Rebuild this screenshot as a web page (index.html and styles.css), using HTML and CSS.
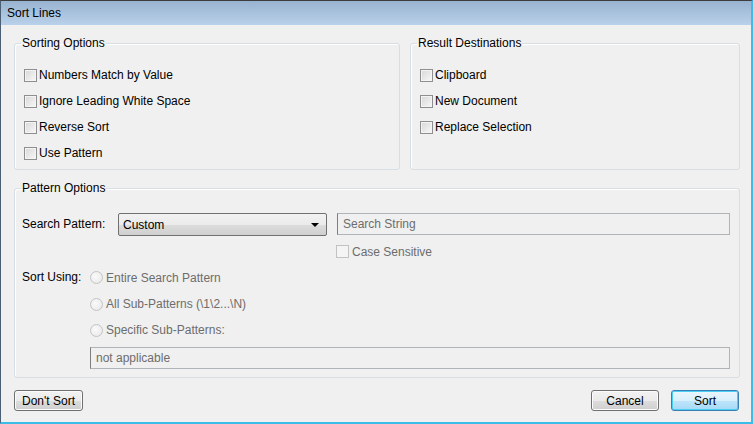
FILE: index.html
```html
<!DOCTYPE html>
<html>
<head>
<meta charset="utf-8">
<link rel="stylesheet" href="styles.css">
</head>
<body>
<div class="window">
  <div class="titlebar">Sort Lines</div>
  <div class="body">
    <div class="top-groups">
      <fieldset class="group">
        <legend>Sorting Options</legend>
        <div class="group-inner">
          <div class="row"><span class="check"></span><span>Numbers Match by Value</span></div>
          <div class="row"><span class="check"></span><span>Ignore Leading White Space</span></div>
          <div class="row"><span class="check"></span><span>Reverse Sort</span></div>
          <div class="row"><span class="check"></span><span>Use Pattern</span></div>
        </div>
      </fieldset>
      <fieldset class="group">
        <legend>Result Destinations</legend>
        <div class="group-inner">
          <div class="row"><span class="check"></span><span>Clipboard</span></div>
          <div class="row"><span class="check"></span><span>New Document</span></div>
          <div class="row"><span class="check"></span><span>Replace Selection</span></div>
        </div>
      </fieldset>
    </div>
    <fieldset class="group pattern">
      <legend>Pattern Options</legend>
      <div class="pattern-inner">
        <div class="search-row">
          <span class="field-label">Search Pattern:</span>
          <div class="combo"><span>Custom</span><span class="arrow"></span></div>
          <div class="textbox">Search String</div>
        </div>
        <div class="case-row">
          <span class="check disabled"></span><span class="dim">Case Sensitive</span>
        </div>
        <div class="sort-using">
          <span class="field-label short">Sort Using:</span>
          <div class="radios">
            <div class="radio-row first"><span class="radio"></span><span class="dim">Entire Search Pattern</span></div>
            <div class="radio-row"><span class="radio"></span><span class="dim">All Sub-Patterns (\1\2...\N)</span></div>
            <div class="radio-row"><span class="radio"></span><span class="dim">Specific Sub-Patterns:</span></div>
            <div class="textbox wide">not applicable</div>
          </div>
        </div>
      </div>
    </fieldset>
    <div class="footer">
      <button class="btn dont">Don't Sort</button>
      <div class="spacer"></div>
      <button class="btn">Cancel</button>
      <button class="btn default">Sort</button>
    </div>
  </div>
</div>
</body>
</html>
```

FILE: styles.css
```css
* { box-sizing: border-box; }
html, body { margin: 0; padding: 0; }
body {
  font-family: "Liberation Sans", Arial, sans-serif;
  font-size: 12px;
  color: #000;
  background: #f0f0f0;
}
.window {
  width: 753px;
  height: 424px;
  background: #f0f0f0;
  border-top: 1px solid #3c3c3c;
  border-left: 1px solid #4a5f74;
  border-right: 2px solid #3cbde8;
  border-bottom: 2px solid #3cbde8;
  display: flex;
  flex-direction: column;
  overflow: hidden;
}
.titlebar {
  height: 24px;
  line-height: 24px;
  padding-left: 6px;
  background: linear-gradient(#98b3d0, #b9d1ea);
  color: #000;
  font-size: 12px;
}
.body {
  padding: 11px 11px 0 13px;
  flex: 1;
  display: flex;
  flex-direction: column;
}
.top-groups {
  display: grid;
  grid-template-columns: 386px 1fr;
  column-gap: 10px;
}
.group {
  margin: 0;
  padding: 0;
  border: 1px solid #d5dfe5;
  border-radius: 3px;
  box-shadow: inset 1px 1px 0 #fff;
  min-width: 0;
}
.group legend {
  margin-left: 6px;
  padding: 0 1px;
  line-height: 14px;
  height: 14px;
  font-size: 12px;
}
.group-inner {
  padding: 12px 0 3px 9px;
  height: 119px;
}
.row {
  height: 26px;
  display: flex;
  align-items: center;
}
.check {
  width: 13px;
  height: 13px;
  border: 1px solid #8f8f8f;
  background: linear-gradient(135deg, #d8d8d8, #f8f8f8);
  box-shadow: inset 0 0 0 1px #f4f4f4;
  margin-right: 2px;
  flex: none;
}
.check.disabled {
  border-color: #c2c2c2;
  background: #f4f4f4;
  box-shadow: none;
}
.pattern {
  margin-top: 11px;
}
.pattern-inner {
  padding: 18px 9px 8px 7px;
}
.search-row {
  display: flex;
  align-items: flex-start;
  height: 23px;
}
.field-label {
  width: 96px;
  line-height: 23px;
  flex: none;
}
.field-label.short {
  width: 68px;
  line-height: 27px;
}
.combo {
  width: 209px;
  height: 23px;
  border: 1px solid #707070;
  border-radius: 2px;
  background: linear-gradient(#f2f2f2 0%, #ebebeb 50%, #dddddd 50%, #cfcfcf 100%);
  display: flex;
  align-items: center;
  justify-content: space-between;
  padding: 0 7px 0 4px;
  flex: none;
}
.arrow {
  width: 0;
  height: 0;
  border-left: 4px solid transparent;
  border-right: 4px solid transparent;
  border-top: 4px solid #000;
  margin-top: 1px;
}
.textbox {
  margin-left: 10px;
  flex: 1;
  height: 22px;
  line-height: 20px;
  border: 1px solid #afb4b8;
  border-left-color: #7e7e7e;
  padding-left: 5px;
  color: #6d6d6d;
  background: #f0f0f0;
}
.case-row {
  margin-top: 9px;
  margin-left: 314px;
  display: flex;
  align-items: center;
  height: 13px;
}
.case-row .check { margin-right: 3px; }
.dim { color: #6d6d6d; }
.sort-using {
  margin-top: 6px;
  display: flex;
  align-items: flex-start;
}
.radios {
  flex: 1;
  display: flex;
  flex-direction: column;
}
.radio-row {
  height: 26px;
  display: flex;
  align-items: center;
}
.radio-row.first { height: 27px; }
.radio {
  width: 13px;
  height: 13px;
  border-radius: 50%;
  border: 1px solid #c4c4c4;
  background: radial-gradient(circle at 40% 40%, #fafafa, #e6e6e6);
  margin-right: 3px;
  flex: none;
}
.textbox.wide {
  margin-left: 0;
  margin-top: 4px;
  flex: none;
}
.footer {
  padding-top: 12px;
  padding-right: 1px;
  display: flex;
  align-items: flex-start;
}
.spacer { flex: 1; }
.btn {
  font-family: "Liberation Sans", Arial, sans-serif;
  font-size: 12px;
  color: #000;
  height: 21px;
  width: 68px;
  padding: 0;
  border: 1px solid #707070;
  border-radius: 3px;
  background: linear-gradient(#f2f2f2 0%, #ebebeb 50%, #dddddd 50%, #cfcfcf 100%);
  box-shadow: inset 0 0 0 1px #fcfcfc;
}
.btn.dont { width: 69px; }
.btn.default {
  margin-left: 12px;
  border-color: #3c7fb1;
  background: linear-gradient(#eaf6fd 0%, #d9f0fc 50%, #bee6fd 50%, #a7d9f5 100%);
  box-shadow: inset 0 0 0 1px #48d0f8;
}
```
